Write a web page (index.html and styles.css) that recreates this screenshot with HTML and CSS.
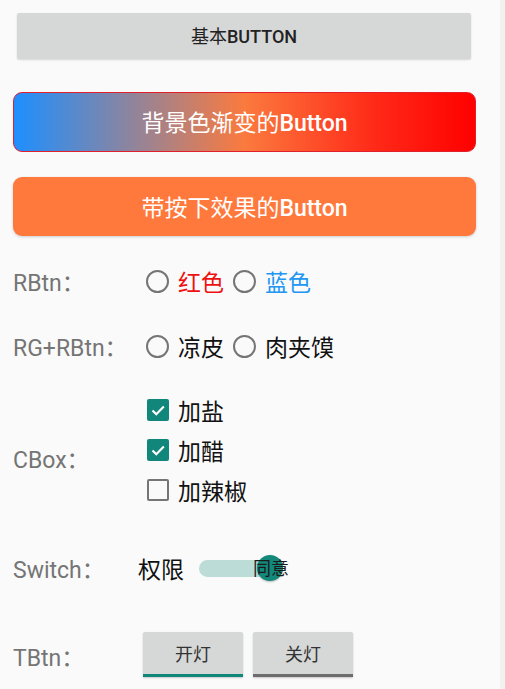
FILE: index.html
```html
<!DOCTYPE html>
<html lang="zh">
<head>
    <meta charset="UTF-8">
    <title>Button Demo</title>
    <link rel="stylesheet" href="styles.css">
</head>
<body>
    <div class="screen">
        <div class="content">
            <button class="btn btn-basic">基本<span class="en">BUTTON</span></button>
            <button class="btn btn-gradient">背景色渐变的<span class="en">Button</span></button>
            <button class="btn btn-press">带按下效果的<span class="en">Button</span></button>

            <div class="row row-rbtn">
                <span class="label">RBtn：</span>
                <div class="options">
                    <span class="radio"></span><span class="opt red">红色</span>
                    <span class="radio"></span><span class="opt blue">蓝色</span>
                </div>
            </div>

            <div class="row row-rg">
                <span class="label">RG+RBtn：</span>
                <div class="options">
                    <span class="radio"></span><span class="opt">凉皮</span>
                    <span class="radio"></span><span class="opt">肉夹馍</span>
                </div>
            </div>

            <div class="row row-cbox">
                <span class="label label-cbox">CBox：</span>
                <div class="checks">
                    <div class="check-item">
                        <span class="checkbox checked">
                            <svg viewBox="0 0 22 22" width="22" height="22"><path d="M5.5 11.5 L9.3 15.2 L16.8 7.6" fill="none" stroke="#fff" stroke-width="2.2"/></svg>
                        </span>
                        <span class="opt">加盐</span>
                    </div>
                    <div class="check-item">
                        <span class="checkbox checked">
                            <svg viewBox="0 0 22 22" width="22" height="22"><path d="M5.5 11.5 L9.3 15.2 L16.8 7.6" fill="none" stroke="#fff" stroke-width="2.2"/></svg>
                        </span>
                        <span class="opt">加醋</span>
                    </div>
                    <div class="check-item">
                        <span class="checkbox"></span>
                        <span class="opt">加辣椒</span>
                    </div>
                </div>
            </div>

            <div class="row row-switch">
                <span class="label">Switch：</span>
                <span class="opt switch-text">权限</span>
                <div class="switch">
                    <span class="track"></span>
                    <span class="thumb"></span>
                    <span class="thumb-text">同意</span>
                </div>
            </div>

            <div class="row row-tbtn">
                <span class="label">TBtn：</span>
                <div class="toggles">
                    <button class="toggle on">开灯</button>
                    <button class="toggle off">关灯</button>
                </div>
            </div>
        </div>
        <div class="edge"></div>
    </div>
</body>
</html>
```

FILE: styles.css
```css
body {
    margin: 0;
    padding: 0;
    background-color: #fafafa;
    font-family: Roboto, "Noto Sans CJK SC", sans-serif;
}

.screen {
    display: flex;
    width: 505px;
    height: 689px;
    overflow: hidden;
}

.content {
    width: 463px;
    padding: 13px 24px 0 13px;
    display: flex;
    flex-direction: column;
}

.edge {
    width: 5px;
    background-color: #f1f1f1;
}

/* ボタン共通 */
.btn {
    font-family: Roboto, "Noto Sans CJK SC", sans-serif;
    border: none;
    padding: 0 0 2px 0;
    cursor: pointer;
    color: #fff;
    font-size: 23px;
    font-weight: normal;
}

.btn .en {
    font-weight: 500;
}

.btn-basic {
    margin: 0 5px 0 4px;
    height: 46px;
    background-color: #d6d7d7;
    color: #222;
    font-size: 18px;
    border-radius: 2px;
    box-shadow: 0 1px 2px rgba(0,0,0,0.15);
}

.btn-gradient {
    margin-top: 33px;
    height: 60px;
    border-radius: 9px;
    border: 1.5px solid #e0202c;
    background: linear-gradient(to right, #1e8fff 0%, #fb7a3e 50%, #ff2a18 78%, #ff0000 100%);
}

.btn-press {
    margin-top: 25px;
    height: 59px;
    border-radius: 9px;
    background-color: #ff783c;
    box-shadow: 0 1px 3px rgba(0,0,0,0.18);
}

/* 行 */
.row {
    display: flex;
    align-items: center;
}

.label {
    width: 133px;
    flex-shrink: 0;
    font-size: 23px;
    color: #757575;
}

.opt {
    font-size: 23px;
    color: #111;
}

.red {
    color: #ee1111;
}

.blue {
    color: #2196f3;
}

.options {
    display: flex;
    align-items: center;
}

.radio {
    width: 19px;
    height: 19px;
    border: 2.5px solid #757575;
    border-radius: 50%;
    margin-right: 9px;
}

.options .opt {
    margin-right: 9px;
}

.row-rbtn {
    margin-top: 23px;
    height: 44px;
}

.row-rg {
    margin-top: 21px;
    height: 44px;
}

.row-cbox {
    margin-top: 22px;
}

.label-cbox {
    padding-top: 15px;
}

.checks {
    display: flex;
    flex-direction: column;
}

.check-item {
    display: flex;
    align-items: center;
    height: 40px;
}

.checkbox {
    width: 22px;
    height: 22px;
    box-sizing: border-box;
    border: 2.5px solid #757575;
    border-radius: 2px;
    margin: 0 9px 0 1px;
}

.checkbox.checked {
    border: none;
    background-color: #10877a;
}

.checkbox svg {
    display: block;
}

/* スイッチ */
.row-switch {
    margin-top: 38px;
    height: 40px;
}

.row-switch .label {
    width: 125px;
}

.switch-text {
    margin-right: 15px;
}

.switch {
    position: relative;
    width: 90px;
    height: 30px;
}

.track {
    position: absolute;
    left: 0;
    top: 7px;
    width: 84px;
    height: 17px;
    border-radius: 9px;
    background-color: #bcdcd8;
}

.thumb {
    position: absolute;
    left: 58px;
    top: 2px;
    width: 26px;
    height: 26px;
    border-radius: 50%;
    background-color: #12897a;
    box-shadow: 0 1px 2px rgba(0,0,0,0.25);
}

.thumb-text {
    position: absolute;
    left: 54px;
    top: 4px;
    font-size: 18px;
    color: #1a1a1a;
    line-height: 24px;
}

/* トグル */
.row-tbtn {
    margin-top: 41px;
    align-items: flex-start;
}

.row-tbtn .label {
    width: 130px;
    padding-top: 10px;
}

.toggles {
    display: flex;
    gap: 10px;
    margin-top: 3px;
}

.toggle {
    font-family: Roboto, "Noto Sans CJK SC", sans-serif;
    width: 100px;
    height: 45px;
    border: none;
    padding: 0;
    background-color: #d6d7d7;
    color: #333;
    font-size: 18px;
    border-radius: 2px 2px 0 0;
    box-shadow: 0 1px 2px rgba(0,0,0,0.2);
}

.toggle.on {
    border-bottom: 3px solid #10877a;
}

.toggle.off {
    border-bottom: 3px solid #6d6d6d;
}
```
